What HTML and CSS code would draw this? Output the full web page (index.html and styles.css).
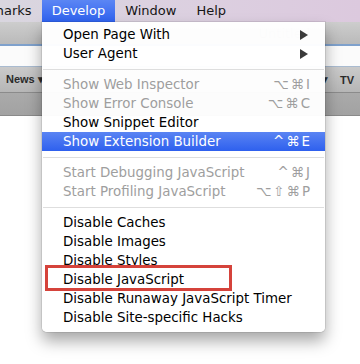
FILE: index.html
```html
<!DOCTYPE html>
<html lang="en">
<head>
    <meta charset="UTF-8">
    <title>Develop menu</title>
    <link rel="stylesheet" href="styles.css">
</head>
<body>
    <div class="menubar">
        <span class="mb-item mb-cut">Bookmarks</span>
        <span class="mb-item mb-active">Develop</span>
        <span class="mb-item">Window</span>
        <span class="mb-item">Help</span>
    </div>

    <div class="window">
        <div class="toolbar"><span class="title">Untitled</span></div>
        <div class="address"></div>
        <div class="bookmarks">
            <span class="bm">News &#9662;</span>
            <span class="bm bm-right">&#9662;</span>
            <span class="bm">TV</span>
        </div>
        <div class="tabbar"></div>
        <div class="page"></div>
    </div>

    <div class="menu">
        <div class="item"><span>Open Page With</span><span class="arrow"></span></div>
        <div class="item"><span>User Agent</span><span class="arrow"></span></div>
        <div class="sep"></div>
        <div class="item off"><span>Show Web Inspector</span><span class="key">&#8997;&#8984;I</span></div>
        <div class="item off"><span>Show Error Console</span><span class="key">&#8997;&#8984;C</span></div>
        <div class="item"><span>Show Snippet Editor</span></div>
        <div class="item hl"><span>Show Extension Builder</span><span class="key">^&#8984;E</span></div>
        <div class="sep"></div>
        <div class="item off"><span>Start Debugging JavaScript</span><span class="key">^&#8984;J</span></div>
        <div class="item off"><span>Start Profiling JavaScript</span><span class="key">&#8997;&#8679;&#8984;P</span></div>
        <div class="sep"></div>
        <div class="item"><span>Disable Caches</span></div>
        <div class="item"><span>Disable Images</span></div>
        <div class="item"><span>Disable Styles</span></div>
        <div class="item marked"><span>Disable JavaScript</span></div>
        <div class="item"><span>Disable Runaway JavaScript Timer</span></div>
        <div class="item"><span>Disable Site-specific Hacks</span></div>
    </div>
</body>
</html>
```

FILE: styles.css
```css
body {
    margin: 0;
    width: 360px;
    height: 364px;
    overflow: hidden;
    position: relative;
    font-family: "DejaVu Sans", sans-serif;
    font-size: 13px;
    color: #000;
    background: #fff;
}
.menubar {
    display: flex;
    height: 22px;
    line-height: 22px;
    background: linear-gradient(to right, #d9d6df, #dccfe0 60%, #dcc9de);
    overflow: hidden;
    white-space: nowrap;
}
.mb-item {
    padding: 0 10px;
    color: #161616;
}
.mb-cut {
    margin-left: -51px;
}
.mb-active {
    color: #fff;
    background: linear-gradient(#5b86f4, #2f62ef);
}
.toolbar {
    height: 22px;
    display: flex;
    justify-content: flex-end;
    align-items: center;
    padding-right: 50px;
    background: linear-gradient(#cdcdcd, #bababa);
}
.title {
    color: #8a8a8a;
}
.address {
    height: 20px;
    border-top: 2px solid #7fa1cc;
    border-bottom: 1px solid #a9bbd0;
    background: #fbfbfb;
}
.bookmarks {
    height: 25px;
    display: flex;
    align-items: center;
    gap: 12px;
    padding: 0 6px;
    background: linear-gradient(#cacaca, #b6b6b6);
    border-bottom: 1px solid #8b8b8b;
    font-family: "Liberation Sans", sans-serif;
    font-weight: bold;
    font-size: 11px;
    color: #2b2b2b;
    white-space: nowrap;
    overflow: hidden;
}
.bm-right {
    margin-left: auto;
}
.tabbar {
    height: 22px;
    background: linear-gradient(#aaaaaa, #a2a2a2);
    border-bottom: 1px solid #8a8a8a;
}
.menu {
    position: absolute;
    left: 42px;
    top: 22px;
    width: 283px;
    padding: 3px 0 5px;
    background: rgba(255, 255, 255, 0.97);
    border-radius: 0 0 5px 5px;
    box-shadow: 0 0 0 1px rgba(0, 0, 0, 0.08), 0 9px 16px rgba(0, 0, 0, 0.35);
    font-size: 13.4px;
}
.item {
    position: relative;
    display: flex;
    justify-content: space-between;
    align-items: center;
    height: 19px;
    padding: 0 15px 0 21px;
    white-space: nowrap;
}
.off {
    color: #9e9e9e;
}
.hl {
    color: #fff;
    background: linear-gradient(#5a84f3, #2e60ee);
}
.key {
    letter-spacing: 2px;
    margin-right: -2px;
}
.arrow {
    width: 0;
    height: 0;
    border-top: 5px solid transparent;
    border-bottom: 5px solid transparent;
    border-left: 8px solid #3a3a3a;
    margin-right: 2px;
}
.sep {
    height: 1px;
    margin: 6px 1px 5px;
    background: #dedede;
}
.marked::after {
    content: "";
    position: absolute;
    left: 3px;
    top: -5px;
    width: 181px;
    height: 20px;
    border: 3px solid #d5433b;
}
```
